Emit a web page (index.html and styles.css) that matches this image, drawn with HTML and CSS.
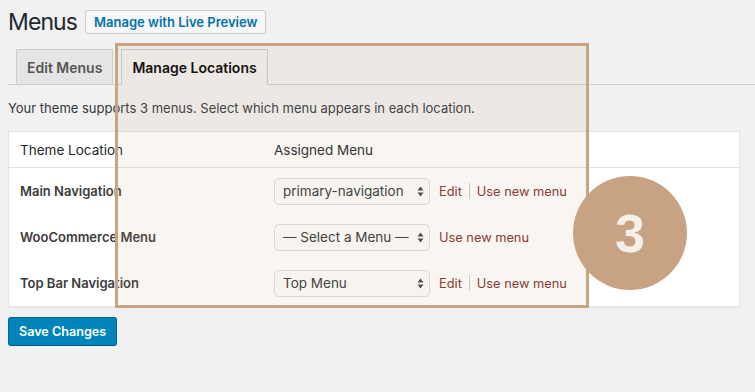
FILE: index.html
```html
<!DOCTYPE html>
<html lang="en">

<head>
    <meta charset="UTF-8">
    <meta name="viewport" content="width=device-width, initial-scale=1.0">
    <title>Menus</title>
    <link rel="stylesheet" href="styles.css">
</head>

<body>
    <div class="wrap">
        <div class="page-head">
            <h1 class="page-title">Menus</h1>
            <a class="head-button" href="#">Manage with Live Preview</a>
        </div>

        <div class="tabs">
            <a class="tab" href="#">Edit Menus</a>
            <a class="tab tab-active" href="#">Manage Locations</a>
        </div>

        <p class="intro">Your theme supports 3 menus. Select which menu appears in each location.</p>

        <div class="locations">
            <div class="loc-row loc-head">
                <div class="loc-name">Theme Location</div>
                <div class="loc-menu">Assigned Menu</div>
            </div>
            <div class="loc-row">
                <div class="loc-name loc-label">Main Navigation</div>
                <div class="loc-menu">
                    <div class="select">primary-navigation
                        <svg class="arrows" width="7" height="11" viewBox="0 0 7 11"><path d="M3.5 0.5 L6.5 4.5 H0.5 Z M3.5 10.5 L0.5 6.5 H6.5 Z" fill="#444"/></svg>
                    </div>
                    <a class="loc-link" href="#">Edit</a><span class="sep"></span><a class="loc-link" href="#">Use new menu</a>
                </div>
            </div>
            <div class="loc-row">
                <div class="loc-name loc-label">WooCommerce Menu</div>
                <div class="loc-menu">
                    <div class="select">— Select a Menu —
                        <svg class="arrows" width="7" height="11" viewBox="0 0 7 11"><path d="M3.5 0.5 L6.5 4.5 H0.5 Z M3.5 10.5 L0.5 6.5 H6.5 Z" fill="#444"/></svg>
                    </div>
                    <a class="loc-link" href="#">Use new menu</a>
                </div>
            </div>
            <div class="loc-row">
                <div class="loc-name loc-label">Top Bar Navigation</div>
                <div class="loc-menu">
                    <div class="select">Top Menu
                        <svg class="arrows" width="7" height="11" viewBox="0 0 7 11"><path d="M3.5 0.5 L6.5 4.5 H0.5 Z M3.5 10.5 L0.5 6.5 H6.5 Z" fill="#444"/></svg>
                    </div>
                    <a class="loc-link" href="#">Edit</a><span class="sep"></span><a class="loc-link" href="#">Use new menu</a>
                </div>
            </div>
        </div>

        <button class="save-button">Save Changes</button>
    </div>

    <!-- callout over the locations panel -->
    <div class="highlight"></div>
    <div class="step-badge">3</div>
</body>
</html>
```

FILE: styles.css
```css
body {
    margin: 0;
    background: #f1f1f1;
    color: #23282d;
    font-family: Inter, "Open Sans", "Liberation Sans", sans-serif;
    font-size: 13px;
    height: 392px;
    overflow: hidden;
    position: relative;
}

.wrap {
    padding: 0 15px 0 8px;
}

.page-head {
    display: flex;
    align-items: center;
    height: 24px;
    padding-top: 10px;
}

.page-title {
    margin: 0 8px 0 0;
    font-size: 23px;
    font-weight: 400;
    letter-spacing: -0.9px;
}

.head-button {
    display: inline-block;
    height: 22px;
    line-height: 22px;
    padding: 0 8px;
    border: 1px solid #ccc;
    border-radius: 3px;
    background: #f7f7f7;
    color: #0073aa;
    font-weight: 600;
    font-size: 13px;
    text-decoration: none;
}

.tabs {
    display: flex;
    gap: 8px;
    margin: 15px -15px 0 0;
    padding-left: 8px;
    border-bottom: 1px solid #ccc;
}

.tab {
    display: block;
    height: 34px;
    line-height: 35px;
    padding: 0 10px;
    margin-bottom: -1px;
    border: 1px solid #ccc;
    border-bottom: none;
    background: #e5e5e5;
    color: #555;
    font-size: 14px;
    font-weight: 600;
    text-decoration: none;
}

.tab-active {
    background: #f1f1f1;
    border-bottom: 1px solid #f1f1f1;
    color: #000;
}

.intro {
    margin: 14px 0 0;
    line-height: 18px;
    color: #32373c;
}

.locations {
    margin-top: 14px;
    width: 730px;
    background: #fff;
    border: 1px solid #e5e5e5;
    box-shadow: 0 1px 1px rgba(0, 0, 0, 0.04);
}

.loc-row {
    display: flex;
    align-items: center;
    height: 46px;
}

.loc-head {
    height: 35px;
    border-bottom: 1px solid #e1e1e1;
    font-size: 13.5px;
}

.loc-name {
    width: 254px;
    padding-left: 11px;
}

.loc-label {
    font-weight: 600;
    color: #3c3c3c;
}

.loc-menu {
    display: flex;
    align-items: center;
}

.select {
    position: relative;
    box-sizing: border-box;
    width: 156px;
    height: 27px;
    line-height: 25px;
    padding-left: 8px;
    border: 1px solid #ddd;
    border-radius: 5px;
    background: #fdfdfd;
    color: #32373c;
    font-size: 13.5px;
    margin-right: 9px;
}

.arrows {
    position: absolute;
    right: 5px;
    top: 7px;
}

.loc-link {
    color: #80312c;
    text-decoration: none;
    font-size: 12.8px;
}

.sep {
    display: inline-block;
    width: 1px;
    height: 16px;
    background: #ccc;
    margin: 0 7px;
}

.save-button {
    margin-top: 10px;
    height: 29px;
    padding: 0 10px;
    border: 1px solid #006799;
    border-bottom-color: #005d8a;
    border-radius: 3px;
    background: #0085ba;
    color: #fff;
    font-family: inherit;
    font-size: 12.6px;
    font-weight: 600;
}

.highlight {
    position: absolute;
    left: 115px;
    top: 43px;
    width: 468px;
    height: 259px;
    border: 3px solid #c8a482;
    background: rgba(200, 164, 130, 0.11);
}

.step-badge {
    position: absolute;
    left: 573px;
    top: 176px;
    width: 114px;
    height: 114px;
    border-radius: 50%;
    background: #c7a383;
    color: #f5efe9;
    font-family: "Liberation Sans", Arial, sans-serif;
    font-size: 54px;
    font-weight: 700;
    line-height: 114px;
    text-align: center;
}
```
